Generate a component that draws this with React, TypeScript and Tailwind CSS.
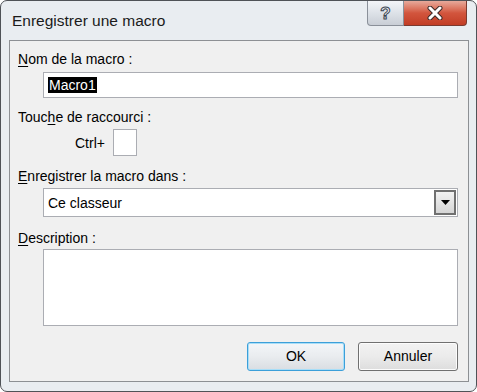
const FONT = "font-['Liberation_Sans','Arial',sans-serif]"

function Label({ access, rest }: { access: string; rest: string }) {
  return (
    <div className="h-[18px] pl-[8px] text-[14px] leading-[18px] text-black">
      <span className="underline underline-offset-2 decoration-1">{access}</span>
      {rest}
    </div>
  )
}

export default function App() {
  return (
    <div className={`${FONT} w-[477px] h-[392px] bg-white`}>
      <div className="flex h-[392px] w-[477px] flex-col rounded-[7px] border border-[#4f5257] bg-[#e9edf1]">
        {/* title bar */}
        <div className="flex h-[39px] items-start">
          <div className="mt-[10px] ml-[11px] text-[15.5px] leading-[20px] text-[#1b1b1b]">Enregistrer une macro</div>
          <div className="ml-auto mr-[9px] flex h-[25px]">
            <div className="flex w-[37px] items-center justify-center rounded-bl-[4px] border border-t-0 border-[#8a9099] bg-gradient-to-b from-[#f3f5f8] via-[#dde2e8] to-[#c9ced6]">
              <span className="text-[17px] font-bold leading-none text-[#eef1f4] [-webkit-text-stroke:1px_#3c4652]">?</span>
            </div>
            <div className="flex w-[63px] items-center justify-center rounded-br-[4px] border border-t-0 border-l-0 border-[#7a3a30] bg-gradient-to-b from-[#e6a99b] via-[#d2553d] to-[#c23d25]">
              <svg width="18" height="14" viewBox="0 0 18 14">
                <path d="M4 2 L14 12 M14 2 L4 12" stroke="#3b2a28" strokeWidth="5" strokeLinecap="round" />
                <path d="M4 2 L14 12 M14 2 L4 12" stroke="#ffffff" strokeWidth="3" strokeLinecap="round" />
              </svg>
            </div>
          </div>
        </div>

        {/* client area */}
        <div className="ml-[8px] flex h-[342px] w-[460px] flex-col border border-[#8d9094] bg-[#f0f0f0]">
          <div className="mt-[9px]">
            <Label access="N" rest="om de la macro :" />
          </div>
          <div className="mt-[4px] ml-[33px] flex h-[26px] w-[415px] items-center border border-[#abadb3] bg-white pl-[4px]">
            <span className="bg-black px-[1px] text-[14px] leading-[16px] text-white">Macro1</span>
          </div>

          <div className="mt-[10px]">
            <div className="h-[18px] pl-[8px] text-[14px] leading-[18px] text-black">
              Touc<span className="underline underline-offset-2 decoration-1">h</span>e de raccourci :
            </div>
          </div>
          <div className="mt-[3px] flex h-[27px] items-center">
            <span className="ml-[65px] text-[14px] leading-[18px] text-black">Ctrl+</span>
            <div className="ml-[8px] h-[27px] w-[24px] border border-[#abadb3] bg-white" />
          </div>

          <div className="mt-[11px]">
            <Label access="E" rest="nregistrer la macro dans :" />
          </div>
          <div className="mt-[3px] ml-[33px] flex h-[29px] w-[415px] items-center border border-[#abadb3] bg-white">
            <span className="ml-[4px] text-[14px] leading-[18px] text-black">Ce classeur</span>
            <div className="ml-auto mr-[1px] flex h-[25px] w-[22px] items-center justify-center border-2 border-[#707070] bg-gradient-to-b from-[#f2f2f2] to-[#d5d5d5]">
              <svg width="9" height="5" viewBox="0 0 9 5">
                <path d="M0 0 H9 L4.5 5 Z" fill="#000" />
              </svg>
            </div>
          </div>

          <div className="mt-[12px]">
            <Label access="D" rest="escription :" />
          </div>
          <div className="mt-[2px] ml-[33px] h-[77px] w-[415px] border border-[#abadb3] bg-white" />

          <div className="mt-[16px] mr-[10px] flex justify-end gap-[13px]">
            <button className="flex h-[29px] w-[98px] items-center justify-center rounded-[3px] border border-[#3c9fd9] bg-gradient-to-b from-[#f3f6f9] via-[#e9ecef] to-[#d9dde2] text-[14px] text-black shadow-[inset_0_0_0_1px_#a8def8]">
              OK
            </button>
            <button className="flex h-[29px] w-[100px] items-center justify-center rounded-[3px] border border-[#707070] bg-gradient-to-b from-[#f2f2f2] via-[#ebebeb] to-[#dddddd] text-[14px] text-black shadow-[inset_0_0_0_1px_#fcfcfc]">
              Annuler
            </button>
          </div>
        </div>
      </div>
    </div>
  )
}
